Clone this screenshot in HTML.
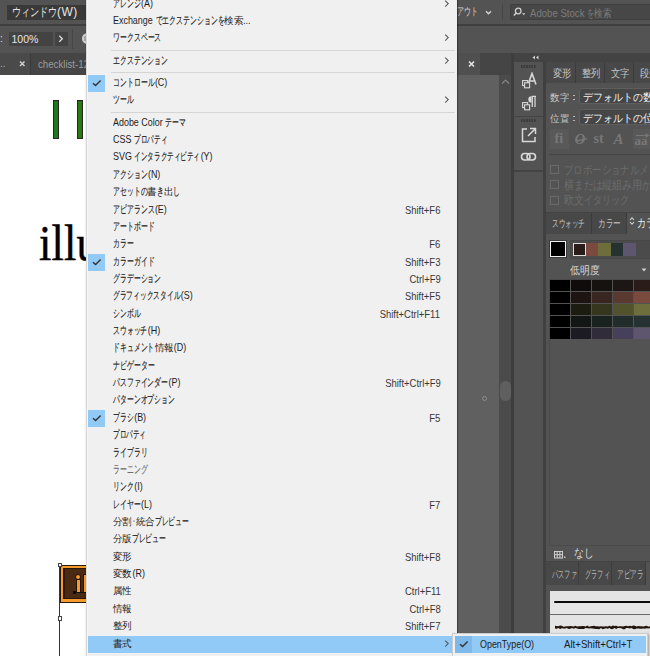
<!DOCTYPE html>
<html><head><meta charset="utf-8"><style>
*{margin:0;padding:0;box-sizing:border-box}
html,body{width:650px;height:656px;overflow:hidden;background:#535353;font-family:"Liberation Sans",sans-serif}
.a{position:absolute}
svg{display:block}
.j{display:inline-block;white-space:nowrap;vertical-align:baseline}
.j i{display:inline-block;font-style:normal;transform-origin:0 50%;white-space:nowrap}
#menu{position:absolute;left:86px;top:-10px;width:371px;height:680px;background:#f0f0f0;border-left:1px solid #d8d8d8;box-shadow:inset 1px 0 0 #f5f5f5,1px 0 1px rgba(0,0,0,.35),-1px 0 1px rgba(0,0,0,.05)}
#mi{position:absolute;left:-87px;top:10px;width:650px;height:656px}
.lbl{position:absolute;left:113px;height:17.360px;line-height:17.360px;font-size:10.5px;transform:scaleX(0.85);transform-origin:0 0;color:#1c1c1c;white-space:nowrap}
.dis{color:#6d6d6d}
.lbl .j i{-webkit-text-stroke:0.15px currentColor}
.lbl .k i{-webkit-text-stroke:0}
.sc{position:absolute;right:209.60000000000002px;height:17.360px;line-height:17.360px;font-size:10.5px;transform:scaleX(0.9);transform-origin:100% 0;color:#383838;white-space:nowrap;text-align:right}
.sep{position:absolute;left:110.5px;width:344px;height:1px;background:#d5d5d5}
.hl{position:absolute;left:88px;width:369px;height:17.3px;background:#91c9f7}
.chk{position:absolute;left:88px;width:17px;height:17px;background:#91c9f7}
.arr{position:absolute;left:444px;width:6px;height:17px}
</style></head><body>
<!-- top bar -->
<div class="a" style="left:0;top:0;width:650px;height:24px;background:#535353"></div>
<div class="a" style="left:0;top:24px;width:650px;height:1.5px;background:#3e3e3e"></div>
<div class="a" style="left:7px;top:5px;width:80px;height:15px;background:#393939"></div>
<div class="a" style="left:11.5px;top:3.5px;height:17px;line-height:17px;font-size:12px;color:#e6e6e6;white-space:nowrap"><span class="j" style="width:45.60px"><i style="font-size:11.5px;transform:scaleX(0.7600)">ウィンドウ</i></span><span style="letter-spacing:0.4px">(W)</span></div>
<!-- control bar -->
<div class="a" style="left:0;top:25.5px;width:650px;height:27px;background:#535353"></div>
<div class="a" style="left:9px;top:31.5px;width:44px;height:14.5px;background:#434343;border-radius:1px"></div>
<div class="a" style="left:55px;top:31.5px;width:13px;height:14.5px;background:#434343;border-radius:1px"></div>
<div class="a" style="left:11.5px;top:31px;height:16px;line-height:16px;font-size:10.5px;color:#e6e6e6">100%</div>
<div class="a" style="left:58px;top:31px;"><svg width="6" height="16"><path d="M1.3 4.8 L4.3 7.8 L1.3 10.8" fill="none" stroke="#ddd" stroke-width="1.3"/></svg></div>
<div class="a" style="left:0;top:32px;height:14px;line-height:14px;font-size:10px;color:#ddd">:</div>
<div class="a" style="left:72px;top:29px;width:1px;height:20px;background:#464646"></div>
<div class="a" style="left:81.6px;top:32.7px;width:11.5px;height:11.5px;border-radius:50%;background:#cfcfcf"></div><div class="a" style="left:83.5px;top:36px;width:4px;height:5px;background:#a8a8a8;border-radius:1px"></div>
<!-- tab bar -->
<div class="a" style="left:0;top:52.5px;width:512px;height:22.5px;background:#454545"></div>
<div class="a" style="left:0;top:52.5px;width:30px;height:22.5px;background:#4a4a4a"></div>
<div class="a" style="left:30px;top:52.5px;width:1px;height:22.5px;background:#3a3a3a"></div>
<div class="a" style="left:0;top:57px;height:14px;line-height:14px;font-size:10px;color:#a8a8a8">..</div>
<div class="a" style="left:18.5px;top:59px"><svg width="7" height="10"><path d="M1 2.5 L5.5 7 M5.5 2.5 L1 7" stroke="#cfcfcf" stroke-width="1.5"/></svg></div>
<div class="a" style="left:38px;top:57px;height:14px;line-height:14px;font-size:10.5px;color:#9c9c9c;white-space:nowrap;transform:scaleX(0.92);transform-origin:0 0">checklist-12</div>
<!-- canvas -->
<div class="a" style="left:0;top:75px;width:457px;height:581px;background:#ffffff"></div>
<div class="a" style="left:53px;top:100px;width:6px;height:39px;background:#1e781e;border:1px solid #2a2420"></div>
<div class="a" style="left:77px;top:100px;width:6px;height:39px;background:#2c7812;border:1px solid #2a2420"></div>
<div class="a" style="left:38.6px;top:218.2px;font-family:'Liberation Serif',serif;font-size:50px;line-height:50px;color:#000;white-space:nowrap;transform:scaleX(0.89);transform-origin:0 0;-webkit-text-stroke:0.5px #000;letter-spacing:0.2px">illustrator</div>
<div class="a" style="left:60px;top:564.5px;width:40px;height:38px;background:#2a1a0e"></div>
<div class="a" style="left:61px;top:565.5px;width:40px;height:36px;background:#f59a2c"></div>
<div class="a" style="left:63.4px;top:567.8px;width:40px;height:31.4px;background:#2a170c"></div>
<div class="a" style="left:65px;top:569px;width:40px;height:28.8px;background:#4a2a12"></div>
<div class="a" style="left:76.3px;top:574.5px;width:4px;height:4px;border-radius:50%;background:#f59a2c;box-shadow:0 0 0 0.8px #1a0e06"></div>
<div class="a" style="left:76.6px;top:580.2px;width:3.6px;height:12px;background:#f59a2c;box-shadow:0 0 0 0.8px #1a0e06"></div>
<div class="a" style="left:83.6px;top:575px;width:3px;height:17px;background:#f59a2c;box-shadow:0 0 0 0.8px #1a0e06"></div>
<div class="a" style="left:73.4px;top:591px;width:2.6px;height:2.6px;background:#000;border-radius:1px"></div>
<div class="a" style="left:75px;top:592.2px;width:12px;height:0.9px;background:#111"></div>
<div class="a" style="left:59.3px;top:566px;width:1px;height:90px;background:#333"></div>
<div class="a" style="left:57.5px;top:562.5px;width:4.8px;height:4.8px;background:#fff;border:1px solid #444"></div>
<div class="a" style="left:57.5px;top:616px;width:4.8px;height:4.8px;background:#fff;border:1px solid #444"></div>
<!-- pasteboard -->
<div class="a" style="left:457px;top:75px;width:42px;height:581px;background:#606060"></div>
<div class="a" style="left:457px;top:52.5px;width:23px;height:22.5px;background:#505050"></div>
<div class="a" style="left:468px;top:60px"><svg width="7" height="9"><path d="M1 1.5 L6 6.5 M6 1.5 L1 6.5" stroke="#e6e6e6" stroke-width="1.6"/></svg></div>
<div class="a" style="left:499px;top:75px;width:12px;height:581px;background:#4b4b4b"></div>
<div class="a" style="left:499.6px;top:380.8px;width:11.2px;height:20px;border-radius:5.5px;background:#5f5f5f"></div>
<div class="a" style="left:501px;top:79px"><svg width="9" height="6"><path d="M1 4.5 L4.5 1.2 L8 4.5" fill="none" stroke="#8a8a8a" stroke-width="1.1"/></svg></div>
<div class="a" style="left:481.5px;top:395.5px;width:5px;height:5px;border-radius:50%;border:1px solid #8c8c8c"></div>
<div class="a" style="left:511px;top:52.5px;width:3px;height:604px;background:#3e3e3e"></div>
<!-- icon column -->
<div class="a" style="left:514px;top:52.5px;width:136px;height:9.5px;background:#434343"></div>
<div class="a" style="left:514px;top:62px;width:29px;height:594px;background:#535353"></div>
<div class="a" style="left:514px;top:115.5px;width:29px;height:1.5px;background:#434343"></div>
<div class="a" style="left:514px;top:170px;width:29px;height:1.5px;background:#434343"></div>
<!-- panel -->
<div class="a" style="left:543px;top:62px;width:3px;height:594px;background:#404040"></div>
<div class="a" style="left:546px;top:62px;width:104px;height:594px;background:#535353"></div>

<!-- top bar right -->
<div class="a" style="left:457px;top:3px;height:16px;line-height:16px;font-size:11px;color:#d6d6d6;white-space:nowrap"><span class="j" style="width:21.00px"><i style="font-size:10.5px;transform:scaleX(0.6364)">アウト</i></span></div>
<div class="a" style="left:484.5px;top:9px"><svg width="7" height="8"><path d="M1 2.2 L3.5 4.8 L6 2.2" fill="none" stroke="#d6d6d6" stroke-width="1.3"/></svg></div>
<div class="a" style="left:501.5px;top:4px;width:1px;height:16px;background:#474747"></div>
<div class="a" style="left:509.5px;top:4px;width:150px;height:16px;background:#474747;border:1px solid #3f3f3f;border-radius:2px"></div>
<div class="a" style="left:512px;top:6px"><svg width="16" height="12"><circle cx="6.2" cy="5" r="2.8" fill="none" stroke="#cfcfcf" stroke-width="1.3"/><path d="M4.3 7 L1.8 9.6" stroke="#cfcfcf" stroke-width="1.5"/><path d="M10 7.3 L13.4 7.3 L11.7 9.2 Z" fill="#cfcfcf"/></svg></div>
<div class="a" style="left:530px;top:4.5px;height:16px;line-height:16px;font-size:10px;color:#7c7c7c;transform:scaleX(0.96);transform-origin:0 0;white-space:nowrap">Adobe Stock <span class="j" style="width:7.50px"><i style="font-size:10.5px;transform:scaleX(0.6818)">を</i></span><span class="j k" style="width:18.00px"><i style="font-size:10.5px;transform:scaleX(0.8182)">検索</i></span></div>
<!-- icon column icons -->
<div class="a" style="left:532px;top:55px"><svg width="7" height="5"><path d="M3 0.5 L0.5 2.5 L3 4.5 Z M6.5 0.5 L4 2.5 L6.5 4.5 Z" fill="#cfcfcf"/></svg></div>
<div class="a" style="left:521px;top:65px"><svg width="16" height="3"><rect x="0.0" y="0" width="1.6" height="3" fill="#3a3a3a"/><rect x="2.6" y="0" width="1.6" height="3" fill="#3a3a3a"/><rect x="5.2" y="0" width="1.6" height="3" fill="#3a3a3a"/><rect x="7.8" y="0" width="1.6" height="3" fill="#3a3a3a"/><rect x="10.4" y="0" width="1.6" height="3" fill="#3a3a3a"/><rect x="13.0" y="0" width="1.6" height="3" fill="#3a3a3a"/></svg></div>
<div class="a" style="left:521px;top:119px"><svg width="16" height="3"><rect x="0.0" y="0" width="1.6" height="3" fill="#3a3a3a"/><rect x="2.6" y="0" width="1.6" height="3" fill="#3a3a3a"/><rect x="5.2" y="0" width="1.6" height="3" fill="#3a3a3a"/><rect x="7.8" y="0" width="1.6" height="3" fill="#3a3a3a"/><rect x="10.4" y="0" width="1.6" height="3" fill="#3a3a3a"/><rect x="13.0" y="0" width="1.6" height="3" fill="#3a3a3a"/></svg></div>
<div class="a" style="left:520px;top:72px"><svg width="20" height="18"><path d="M8 12.5 L12 1.5 L16 12.5 M9.3 9 L14.7 9" fill="none" stroke="#d8d8d8" stroke-width="1.6"/><rect x="2.6" y="8.6" width="5" height="5" fill="#535353" stroke="#d8d8d8" stroke-width="1.1"/><rect x="4.6" y="10.8" width="5" height="5" fill="#535353" stroke="#d8d8d8" stroke-width="1.1"/></svg></div>
<div class="a" style="left:520px;top:94px"><svg width="20" height="18"><path d="M11.5 2.3 A3.2 3.2 0 0 0 11.5 8.7 Z" fill="#d8d8d8"/><path d="M11.8 2.3 L16 2.3 M12.3 2.3 L12.3 13 M15 2.3 L15 13" fill="none" stroke="#d8d8d8" stroke-width="1.3"/><rect x="2.6" y="8.6" width="5" height="5" fill="#535353" stroke="#d8d8d8" stroke-width="1.1"/><rect x="4.6" y="10.8" width="5" height="5" fill="#535353" stroke="#d8d8d8" stroke-width="1.1"/></svg></div>
<div class="a" style="left:520px;top:126px"><svg width="18" height="18"><path d="M7 3 L2.5 3 L2.5 15.5 L15 15.5 L15 11" fill="none" stroke="#d8d8d8" stroke-width="1.5"/><path d="M8 10 L15 3 M10 2.5 L15.5 2.5 L15.5 8" fill="none" stroke="#d8d8d8" stroke-width="1.5"/></svg></div>
<div class="a" style="left:520px;top:151px"><svg width="18" height="12"><rect x="1.5" y="2.5" width="8.5" height="6.5" rx="3.2" fill="none" stroke="#d8d8d8" stroke-width="1.6"/><rect x="7" y="2.5" width="8.5" height="6.5" rx="3.2" fill="none" stroke="#d8d8d8" stroke-width="1.6"/></svg></div>
<!-- panel top tabs -->
<div class="a" style="left:546px;top:62px;width:104px;height:21px;background:#484848"></div>
<div class="a" style="left:574.5px;top:62px;width:1px;height:21px;background:#3c3c3c"></div>
<div class="a" style="left:603.5px;top:62px;width:1px;height:21px;background:#3c3c3c"></div>
<div class="a" style="left:632.5px;top:62px;width:1px;height:21px;background:#3c3c3c"></div>
<div class="a" style="left:552.5px;top:64px;height:16px;line-height:16px;color:#c4c4c4;white-space:nowrap"><span class="j k" style="width:18.60px"><i style="font-size:11px;transform:scaleX(0.8455)">変形</i></span></div>
<div class="a" style="left:582px;top:64px;height:16px;line-height:16px;color:#c4c4c4;white-space:nowrap"><span class="j k" style="width:18.60px"><i style="font-size:11px;transform:scaleX(0.8455)">整列</i></span></div>
<div class="a" style="left:611px;top:64px;height:16px;line-height:16px;color:#c4c4c4;white-space:nowrap"><span class="j k" style="width:18.60px"><i style="font-size:11px;transform:scaleX(0.8455)">文字</i></span></div>
<div class="a" style="left:640px;top:64px;height:16px;line-height:16px;color:#c4c4c4;white-space:nowrap"><span class="j k" style="width:18.60px"><i style="font-size:11px;transform:scaleX(0.8455)">段落</i></span></div>
<!-- opentype panel body -->
<div class="a" style="left:549.5px;top:88px;height:16px;line-height:16px;color:#c8c8c8;white-space:nowrap"><span class="j k" style="width:19.00px"><i style="font-size:10px;transform:scaleX(0.9500)">数字</i></span></div><div class="a" style="left:573px;top:94.5px;width:1.6px;height:1.6px;background:#b8b8b8"></div><div class="a" style="left:573px;top:98.5px;width:1.6px;height:1.6px;background:#b8b8b8"></div>
<div class="a" style="left:578.5px;top:88px;width:80px;height:16px;background:#464646;border:1px solid #5e5e5e;border-radius:3px"></div>
<div class="a" style="left:583px;top:88px;height:16px;line-height:16px;color:#f4f4f4;white-space:nowrap"><span class="j" style="width:59.50px"><i style="font-size:10.5px;transform:scaleX(0.9015)">デフォルトの</i></span><span class="j k" style="width:22.00px"><i style="font-size:10.5px;transform:scaleX(1.0000)">数字</i></span></div>
<div class="a" style="left:549.5px;top:109px;height:16px;line-height:16px;color:#c8c8c8;white-space:nowrap"><span class="j k" style="width:19.00px"><i style="font-size:10px;transform:scaleX(0.9500)">位置</i></span></div><div class="a" style="left:573px;top:115.5px;width:1.6px;height:1.6px;background:#b8b8b8"></div><div class="a" style="left:573px;top:119.5px;width:1.6px;height:1.6px;background:#b8b8b8"></div>
<div class="a" style="left:578.5px;top:109px;width:80px;height:16px;background:#464646;border:1px solid #5e5e5e;border-radius:3px"></div>
<div class="a" style="left:583px;top:108.5px;height:16px;line-height:16px;color:#f4f4f4;white-space:nowrap"><span class="j" style="width:59.50px"><i style="font-size:10.5px;transform:scaleX(0.9015)">デフォルトの</i></span><span class="j k" style="width:22.00px"><i style="font-size:10.5px;transform:scaleX(1.0000)">位置</i></span></div>
<div class="a" style="left:550px;top:129px;width:19px;height:20px;background:#595959"></div>
<div class="a" style="left:633px;top:129px;width:19px;height:20px;background:#595959"></div>
<div class="a" style="left:554.5px;top:129px;height:20px;line-height:20px;font-family:'Liberation Serif',serif;font-weight:bold;font-size:14px;color:#777;white-space:nowrap">fi</div>
<div class="a" style="left:574.5px;top:129px;height:20px;line-height:20px;font-family:'Liberation Serif',serif;font-style:italic;font-weight:bold;font-size:15px;color:#777;white-space:nowrap">O</div>
<div class="a" style="left:575px;top:137.5px"><svg width="14" height="4"><path d="M1 3.2 L12 0.6" stroke="#777" stroke-width="1.4"/></svg></div>
<div class="a" style="left:593.5px;top:129px;height:20px;line-height:20px;font-family:'Liberation Serif',serif;font-weight:bold;font-size:14px;color:#777;white-space:nowrap">st</div>
<div class="a" style="left:613.5px;top:129px;height:20px;line-height:20px;font-family:'Liberation Serif',serif;font-style:italic;font-weight:bold;font-size:15px;color:#777;white-space:nowrap">A</div>
<div class="a" style="left:634.5px;top:131px;height:20px;line-height:20px;font-family:'Liberation Serif',serif;font-weight:bold;font-size:13px;color:#777;white-space:nowrap">aa</div><div class="a" style="left:635px;top:132.5px"><svg width="16" height="5"><path d="M1 2.5 L13 2.5 M10.5 0.8 L13.5 2.5 L10.5 4.2" fill="none" stroke="#777" stroke-width="1.2"/></svg></div>
<div class="a" style="left:549px;top:154px;width:101px;height:1px;background:#444"></div>
<div class="a" style="left:550px;top:164.8px;width:9px;height:9px;border:1px solid #6a6a6a"></div>
<div class="a" style="left:550px;top:180.4px;width:9px;height:9px;border:1px solid #6a6a6a"></div>
<div class="a" style="left:550px;top:196px;width:9px;height:9px;border:1px solid #6a6a6a"></div>
<div class="a" style="left:563.5px;top:161px;height:16px;line-height:16px;color:#6c6c6c;white-space:nowrap"><span class="j" style="width:122.20px"><i style="font-size:11.5px;transform:scaleX(0.7833)">プロポーショナルメトリクス</i></span></div>
<div class="a" style="left:563.5px;top:175.8px;height:16px;line-height:16px;color:#6c6c6c;white-space:nowrap"><span class="j k" style="width:10.00px"><i style="font-size:11.5px;transform:scaleX(0.8333)">横</i></span><span class="j" style="width:28.80px"><i style="font-size:11.5px;transform:scaleX(0.8000)">または</i></span><span class="j k" style="width:20.00px"><i style="font-size:11.5px;transform:scaleX(0.8333)">縦組</i></span><span class="j" style="width:9.60px"><i style="font-size:11.5px;transform:scaleX(0.8000)">み</i></span><span class="j k" style="width:10.00px"><i style="font-size:11.5px;transform:scaleX(0.8333)">用</i></span><span class="j" style="width:19.20px"><i style="font-size:11.5px;transform:scaleX(0.8000)">かな</i></span></div>
<div class="a" style="left:563.5px;top:191.3px;height:16px;line-height:16px;color:#6c6c6c;white-space:nowrap"><span class="j k" style="width:20.00px"><i style="font-size:11.5px;transform:scaleX(0.8333)">欧文</i></span><span class="j" style="width:45.40px"><i style="font-size:11.5px;transform:scaleX(0.7567)">イタリック</i></span></div>
<!-- swatches panel tabs -->
<div class="a" style="left:546px;top:212.5px;width:104px;height:21px;background:#484848"></div>
<div class="a" style="left:546px;top:212px;width:104px;height:1px;background:#444"></div>
<div class="a" style="left:591px;top:212.5px;width:1px;height:21px;background:#3c3c3c"></div>
<div class="a" style="left:625.5px;top:212.5px;width:1px;height:21px;background:#3c3c3c"></div>
<div class="a" style="left:626.5px;top:212.5px;width:24px;height:21px;background:#535353"></div>
<div class="a" style="left:552px;top:214px;height:16px;line-height:16px;color:#c4c4c4;white-space:nowrap"><span class="j" style="width:32.80px"><i style="font-size:11px;transform:scaleX(0.5964)">スウォッチ</i></span></div>
<div class="a" style="left:598px;top:214px;height:16px;line-height:16px;color:#c4c4c4;white-space:nowrap"><span class="j" style="width:22.80px"><i style="font-size:11px;transform:scaleX(0.6909)">カラー</i></span></div>
<div class="a" style="left:629px;top:216px"><svg width="6" height="10"><path d="M1 4 L3 1.8 L5 4 M1 6 L3 8.2 L5 6" fill="none" stroke="#cfcfcf" stroke-width="1.1"/></svg></div>
<div class="a" style="left:637px;top:214px;height:16px;line-height:16px;color:#f0f0f0;white-space:nowrap"><span class="j" style="width:54.00px"><i style="font-size:11.5px;transform:scaleX(0.7500)">カラーガイド</i></span></div>
<!-- color guide body -->
<div class="a" style="left:549.7px;top:240.5px;width:16px;height:16px;background:#000;border:1.6px solid #f2f2f2;box-shadow:0 0 0 1px #3a3a3a"></div>
<div class="a" style="left:570px;top:240px;width:85px;height:19px;background:#4b4b4b;border:1px solid #474747"></div>
<div class="a" style="left:573px;top:243px;width:12.5px;height:13px;background:#2a1c18;border:1.5px solid #dcdcdc"></div>
<div class="a" style="left:585.5px;top:243px;width:12.5px;height:13px;background:#7a4a3e"></div>
<div class="a" style="left:598px;top:243px;width:12.5px;height:13px;background:#6e6e3c"></div>
<div class="a" style="left:610.5px;top:243px;width:12.5px;height:13px;background:#263232"></div>
<div class="a" style="left:623px;top:243px;width:12.5px;height:13px;background:#5e566e"></div>
<div class="a" style="left:570px;top:261px;height:16px;line-height:16px;color:#d8d8d8;white-space:nowrap"><span class="j k" style="width:29.40px"><i style="font-size:11px;transform:scaleX(0.8909)">低明度</i></span></div>
<div class="a" style="left:641px;top:268px"><svg width="6" height="4"><path d="M0.5 0.5 L5.5 0.5 L3 3.5 Z" fill="#d0d0d0"/></svg></div>
<div class="a" style="left:549px;top:279px;width:110px;height:267px;border:1px solid #4a4a4a"></div>
<div class="a" style="left:550px;top:280px;width:20px;height:11px;background:#000000"></div>
<div class="a" style="left:571px;top:280px;width:20px;height:11px;background:#100c0b"></div>
<div class="a" style="left:592px;top:280px;width:20px;height:11px;background:#151210"></div>
<div class="a" style="left:613px;top:280px;width:20px;height:11px;background:#1c1614"></div>
<div class="a" style="left:634px;top:280px;width:20px;height:11px;background:#2a1c18"></div>
<div class="a" style="left:550px;top:292px;width:20px;height:11px;background:#000000"></div>
<div class="a" style="left:571px;top:292px;width:20px;height:11px;background:#1e1412"></div>
<div class="a" style="left:592px;top:292px;width:20px;height:11px;background:#3a2620"></div>
<div class="a" style="left:613px;top:292px;width:20px;height:11px;background:#5a3a30"></div>
<div class="a" style="left:634px;top:292px;width:20px;height:11px;background:#7a4a3e"></div>
<div class="a" style="left:550px;top:304px;width:20px;height:11px;background:#000000"></div>
<div class="a" style="left:571px;top:304px;width:20px;height:11px;background:#1c1c10"></div>
<div class="a" style="left:592px;top:304px;width:20px;height:11px;background:#36361e"></div>
<div class="a" style="left:613px;top:304px;width:20px;height:11px;background:#52522c"></div>
<div class="a" style="left:634px;top:304px;width:20px;height:11px;background:#6e6e3c"></div>
<div class="a" style="left:550px;top:316px;width:20px;height:11px;background:#000000"></div>
<div class="a" style="left:571px;top:316px;width:20px;height:11px;background:#121614"></div>
<div class="a" style="left:592px;top:316px;width:20px;height:11px;background:#1a2220"></div>
<div class="a" style="left:613px;top:316px;width:20px;height:11px;background:#222c2a"></div>
<div class="a" style="left:634px;top:316px;width:20px;height:11px;background:#263232"></div>
<div class="a" style="left:550px;top:328px;width:20px;height:11px;background:#000000"></div>
<div class="a" style="left:571px;top:328px;width:20px;height:11px;background:#1c1a22"></div>
<div class="a" style="left:592px;top:328px;width:20px;height:11px;background:#302c3a"></div>
<div class="a" style="left:613px;top:328px;width:20px;height:11px;background:#46405a"></div>
<div class="a" style="left:634px;top:328px;width:20px;height:11px;background:#5e566e"></div>
<div class="a" style="left:553.5px;top:550.5px"><svg width="12" height="8"><rect x="0.5" y="0.5" width="8" height="6.5" fill="none" stroke="#d0d0d0" stroke-width="1"/><path d="M3.2 0.5 V7 M5.9 0.5 V7 M0.5 3.7 H8.5" stroke="#d0d0d0" stroke-width="1"/><rect x="10" y="5.5" width="1.4" height="1.4" fill="#d0d0d0"/></svg></div>
<div class="a" style="left:573.5px;top:544px;height:16px;line-height:16px;color:#d8d8d8;white-space:nowrap"><span class="j" style="width:19.60px"><i style="font-size:12px;transform:scaleX(0.8167)">なし</i></span></div>
<!-- brushes panel tabs -->
<div class="a" style="left:546px;top:561px;width:104px;height:1px;background:#434343"></div>
<div class="a" style="left:546px;top:562px;width:99px;height:22.5px;background:#484848"></div>
<div class="a" style="left:578px;top:562px;width:1px;height:22.5px;background:#3c3c3c"></div>
<div class="a" style="left:611px;top:562px;width:1px;height:22.5px;background:#3c3c3c"></div>
<div class="a" style="left:644.5px;top:562px;width:1px;height:22.5px;background:#3c3c3c"></div>
<div class="a" style="left:552px;top:564.8px;height:16px;line-height:16px;color:#b8b8b8;white-space:nowrap"><span class="j" style="width:24.80px"><i style="font-size:10.5px;transform:scaleX(0.5636)">パスファ</i></span></div>
<div class="a" style="left:585px;top:564.8px;height:16px;line-height:16px;color:#b8b8b8;white-space:nowrap"><span class="j" style="width:24.80px"><i style="font-size:10.5px;transform:scaleX(0.5636)">グラフィ</i></span></div>
<div class="a" style="left:617px;top:564.8px;height:16px;line-height:16px;color:#b8b8b8;white-space:nowrap"><span class="j" style="width:26.40px"><i style="font-size:10.5px;transform:scaleX(0.6000)">アピアラ</i></span></div>
<div class="a" style="left:550px;top:590.5px;width:100px;height:66px;background:#e4e4e4"></div>
<div class="a" style="left:553.8px;top:600.8px;width:97px;height:1.8px;background:#0a0a0a;border-radius:1px"></div>
<div class="a" style="left:550px;top:614px;width:100px;height:1px;background:#6a6a6a"></div>
<div class="a" style="left:555px;top:624.5px"><svg width="100" height="5"><path d="M0.0 0.71 L1.7 0.88 L3.4 1.21 L5.1 0.42 L6.8 0.74 L8.5 1.69 L10.2 1.49 L11.9 1.23 L13.6 1.23 L15.3 1.08 L17.0 1.27 L18.7 1.39 L20.4 0.79 L22.1 1.53 L23.8 1.33 L25.5 1.33 L27.2 0.91 L28.9 0.98 L30.6 1.54 L32.3 0.58 L34.0 1.66 L35.7 1.21 L37.4 1.06 L39.1 0.86 L40.8 1.16 L42.5 1.29 L44.2 1.51 L45.9 1.27 L47.6 1.52 L49.3 1.58 L51.0 1.33 L52.7 1.48 L54.4 0.77 L56.1 1.51 L57.8 0.52 L59.5 0.93 L61.2 0.78 L62.9 1.53 L64.6 1.20 L66.3 1.33 L68.0 1.55 L69.7 1.06 L71.4 0.80 L73.1 1.18 L74.8 0.66 L76.5 1.19 L78.2 0.46 L79.9 0.81 L81.6 1.57 L83.3 1.00 L85.0 1.24 L86.7 1.13 L88.4 1.62 L90.1 0.96 L91.8 0.71 L93.5 1.67 L95.2 1.11 L96.9 0.94 L98.6 0.43 L98.6 3.70 L96.9 3.65 L95.2 2.91 L93.5 3.58 L91.8 3.29 L90.1 3.84 L88.4 3.56 L86.7 3.71 L85.0 3.67 L83.3 3.58 L81.6 3.39 L79.9 4.15 L78.2 4.03 L76.5 3.10 L74.8 3.43 L73.1 2.94 L71.4 3.00 L69.7 4.20 L68.0 4.17 L66.3 3.33 L64.6 2.96 L62.9 2.96 L61.2 3.90 L59.5 3.10 L57.8 3.94 L56.1 4.19 L54.4 2.98 L52.7 3.65 L51.0 3.17 L49.3 3.64 L47.6 4.15 L45.9 3.11 L44.2 4.19 L42.5 4.11 L40.8 4.08 L39.1 3.66 L37.4 3.40 L35.7 3.29 L34.0 3.47 L32.3 3.18 L30.6 3.03 L28.9 4.12 L27.2 3.94 L25.5 4.10 L23.8 4.04 L22.1 3.51 L20.4 2.94 L18.7 3.67 L17.0 2.98 L15.3 3.86 L13.6 4.03 L11.9 3.10 L10.2 3.52 L8.5 3.51 L6.8 3.20 L5.1 3.99 L3.4 2.99 L1.7 3.69 L0.0 3.61 Z" fill="#24160f"/></svg></div>
<div id="menu"><div id="mi">
<div class="lbl" style="top:-5.44px"><span class="j" style="width:32.47px"><i style="font-size:10.5px;transform:scaleX(0.7380)">アレンジ</i></span><span style="margin-left:0.6px">(A)</span></div>
<div class="arr" style="top:-5.44px"><svg width="6" height="17" viewBox="0 0 6 17"><path d="M1.2 5.6 L4.2 8.6 L1.2 11.6" fill="none" stroke="#5a5a5a" stroke-width="1.1"/></svg></div>
<div class="lbl" style="top:11.92px">Exchange <span class="j" style="width:81.06px"><i style="font-size:10.5px;transform:scaleX(0.7369)">でエクステンションを</i></span><span class="j k" style="width:22.35px"><i style="font-size:9.5px;transform:scaleX(1.1176)">検索</i></span>...</div>
<div class="lbl" style="top:29.28px"><span class="j" style="width:56.82px"><i style="font-size:10.5px;transform:scaleX(0.7380)">ワークスペース</i></span></div>
<div class="arr" style="top:29.28px"><svg width="6" height="17" viewBox="0 0 6 17"><path d="M1.2 5.6 L4.2 8.6 L1.2 11.6" fill="none" stroke="#5a5a5a" stroke-width="1.1"/></svg></div>
<div class="sep" style="top:49.64px"></div>
<div class="lbl" style="top:51.64px"><span class="j" style="width:64.82px"><i style="font-size:10.5px;transform:scaleX(0.7366)">エクステンション</i></span></div>
<div class="arr" style="top:51.64px"><svg width="6" height="17" viewBox="0 0 6 17"><path d="M1.2 5.6 L4.2 8.6 L1.2 11.6" fill="none" stroke="#5a5a5a" stroke-width="1.1"/></svg></div>
<div class="sep" style="top:72.00px"></div>
<div class="chk" style="top:75.00px"><svg width="17" height="17" viewBox="0 0 17 17"><path d="M5 8.2 L7.6 10.6 L12.6 5.4" fill="none" stroke="#333" stroke-width="1.4"/></svg></div>
<div class="lbl" style="top:74.00px"><span class="j" style="width:48.71px"><i style="font-size:10.5px;transform:scaleX(0.7380)">コントロール</i></span><span style="margin-left:0.6px">(C)</span></div>
<div class="lbl" style="top:91.36px"><span class="j" style="width:24.35px"><i style="font-size:10.5px;transform:scaleX(0.7380)">ツール</i></span></div>
<div class="arr" style="top:91.36px"><svg width="6" height="17" viewBox="0 0 6 17"><path d="M1.2 5.6 L4.2 8.6 L1.2 11.6" fill="none" stroke="#5a5a5a" stroke-width="1.1"/></svg></div>
<div class="sep" style="top:111.72px"></div>
<div class="lbl" style="top:113.72px">Adobe Color <span class="j" style="width:24.35px"><i style="font-size:10.5px;transform:scaleX(0.7380)">テーマ</i></span></div>
<div class="lbl" style="top:131.08px">CSS <span class="j" style="width:38.71px"><i style="font-size:10.5px;transform:scaleX(0.7037)">プロパティ</i></span></div>
<div class="lbl" style="top:148.44px">SVG <span class="j" style="width:77.41px"><i style="font-size:10.5px;transform:scaleX(0.7037)">インタラクティビティ</i></span><span style="margin-left:0.6px">(Y)</span></div>
<div class="lbl" style="top:165.80px"><span class="j" style="width:40.47px"><i style="font-size:10.5px;transform:scaleX(0.7358)">アクション</i></span><span style="margin-left:0.6px">(N)</span></div>
<div class="lbl" style="top:183.16px"><span class="j" style="width:40.47px"><i style="font-size:10.5px;transform:scaleX(0.7358)">アセットの</i></span><span class="j k" style="width:11.18px"><i style="font-size:9.5px;transform:scaleX(1.1176)">書</i></span><span class="j" style="width:8.12px"><i style="font-size:10.5px;transform:scaleX(0.7380)">き</i></span><span class="j k" style="width:11.18px"><i style="font-size:9.5px;transform:scaleX(1.1176)">出</i></span><span class="j" style="width:8.12px"><i style="font-size:10.5px;transform:scaleX(0.7380)">し</i></span></div>
<div class="lbl" style="top:200.52px"><span class="j" style="width:48.71px"><i style="font-size:10.5px;transform:scaleX(0.7380)">アピアランス</i></span><span style="margin-left:0.6px">(E)</span></div>
<div class="sc" style="top:201.52px">Shift+F6</div>
<div class="lbl" style="top:217.88px"><span class="j" style="width:48.71px"><i style="font-size:10.5px;transform:scaleX(0.7380)">アートボード</i></span></div>
<div class="lbl" style="top:235.24px"><span class="j" style="width:24.35px"><i style="font-size:10.5px;transform:scaleX(0.7380)">カラー</i></span></div>
<div class="sc" style="top:236.24px">F6</div>
<div class="chk" style="top:253.60px"><svg width="17" height="17" viewBox="0 0 17 17"><path d="M5 8.2 L7.6 10.6 L12.6 5.4" fill="none" stroke="#333" stroke-width="1.4"/></svg></div>
<div class="lbl" style="top:252.60px"><span class="j" style="width:48.71px"><i style="font-size:10.5px;transform:scaleX(0.7380)">カラーガイド</i></span></div>
<div class="sc" style="top:253.60px">Shift+F3</div>
<div class="lbl" style="top:269.96px"><span class="j" style="width:56.71px"><i style="font-size:10.5px;transform:scaleX(0.7364)">グラデーション</i></span></div>
<div class="sc" style="top:270.96px">Ctrl+F9</div>
<div class="lbl" style="top:287.32px"><span class="j" style="width:79.18px"><i style="font-size:10.5px;transform:scaleX(0.7198)">グラフィックスタイル</i></span><span style="margin-left:0.6px">(S)</span></div>
<div class="sc" style="top:288.32px">Shift+F5</div>
<div class="lbl" style="top:304.68px"><span class="j" style="width:32.47px"><i style="font-size:10.5px;transform:scaleX(0.7380)">シンボル</i></span></div>
<div class="sc" style="top:305.68px">Shift+Ctrl+F11</div>
<div class="lbl" style="top:322.04px"><span class="j" style="width:40.35px"><i style="font-size:10.5px;transform:scaleX(0.7337)">スウォッチ</i></span><span style="margin-left:0.6px">(H)</span></div>
<div class="lbl" style="top:339.40px"><span class="j" style="width:48.59px"><i style="font-size:10.5px;transform:scaleX(0.7362)">ドキュメント</i></span><span class="j k" style="width:22.35px"><i style="font-size:9.5px;transform:scaleX(1.1176)">情報</i></span><span style="margin-left:0.6px">(D)</span></div>
<div class="lbl" style="top:356.76px"><span class="j" style="width:48.71px"><i style="font-size:10.5px;transform:scaleX(0.7380)">ナビゲーター</i></span></div>
<div class="lbl" style="top:374.12px"><span class="j" style="width:64.82px"><i style="font-size:10.5px;transform:scaleX(0.7366)">パスファインダー</i></span><span style="margin-left:0.6px">(P)</span></div>
<div class="sc" style="top:375.12px">Shift+Ctrl+F9</div>
<div class="lbl" style="top:391.48px"><span class="j" style="width:72.94px"><i style="font-size:10.5px;transform:scaleX(0.7368)">パターンオプション</i></span></div>
<div class="chk" style="top:409.84px"><svg width="17" height="17" viewBox="0 0 17 17"><path d="M5 8.2 L7.6 10.6 L12.6 5.4" fill="none" stroke="#333" stroke-width="1.4"/></svg></div>
<div class="lbl" style="top:408.84px"><span class="j" style="width:24.35px"><i style="font-size:10.5px;transform:scaleX(0.7380)">ブラシ</i></span><span style="margin-left:0.6px">(B)</span></div>
<div class="sc" style="top:409.84px">F5</div>
<div class="lbl" style="top:426.20px"><span class="j" style="width:38.71px"><i style="font-size:10.5px;transform:scaleX(0.7037)">プロパティ</i></span></div>
<div class="lbl" style="top:443.56px"><span class="j" style="width:40.59px"><i style="font-size:10.5px;transform:scaleX(0.7380)">ライブラリ</i></span></div>
<div class="lbl dis" style="top:460.92px"><span class="j" style="width:40.59px"><i style="font-size:10.5px;transform:scaleX(0.7380)">ラーニング</i></span></div>
<div class="lbl" style="top:478.28px"><span class="j" style="width:24.35px"><i style="font-size:10.5px;transform:scaleX(0.7380)">リンク</i></span><span style="margin-left:0.6px">(I)</span></div>
<div class="lbl" style="top:495.64px"><span class="j" style="width:32.47px"><i style="font-size:10.5px;transform:scaleX(0.7380)">レイヤー</i></span><span style="margin-left:0.6px">(L)</span></div>
<div class="sc" style="top:496.64px">F7</div>
<div class="lbl" style="top:513.00px"><span class="j k" style="width:22.35px"><i style="font-size:9.5px;transform:scaleX(1.1176)">分割</i></span><span class="j" style="width:4.50px"><i style="font-size:10.5px;transform:scaleX(0.4091)">・</i></span><span class="j k" style="width:22.35px"><i style="font-size:9.5px;transform:scaleX(1.1176)">統合</i></span><span class="j" style="width:40.47px"><i style="font-size:10.5px;transform:scaleX(0.7358)">プレビュー</i></span></div>
<div class="lbl" style="top:530.36px"><span class="j k" style="width:22.35px"><i style="font-size:9.5px;transform:scaleX(1.1176)">分版</i></span><span class="j" style="width:40.47px"><i style="font-size:10.5px;transform:scaleX(0.7358)">プレビュー</i></span></div>
<div class="lbl" style="top:547.72px"><span class="j k" style="width:22.35px"><i style="font-size:9.5px;transform:scaleX(1.1176)">変形</i></span></div>
<div class="sc" style="top:548.72px">Shift+F8</div>
<div class="lbl" style="top:565.08px"><span class="j k" style="width:22.35px"><i style="font-size:9.5px;transform:scaleX(1.1176)">変数</i></span><span style="margin-left:0.6px">(R)</span></div>
<div class="lbl" style="top:582.44px"><span class="j k" style="width:22.35px"><i style="font-size:9.5px;transform:scaleX(1.1176)">属性</i></span></div>
<div class="sc" style="top:583.44px">Ctrl+F11</div>
<div class="lbl" style="top:599.80px"><span class="j k" style="width:22.35px"><i style="font-size:9.5px;transform:scaleX(1.1176)">情報</i></span></div>
<div class="sc" style="top:600.80px">Ctrl+F8</div>
<div class="lbl" style="top:617.16px"><span class="j k" style="width:22.35px"><i style="font-size:9.5px;transform:scaleX(1.1176)">整列</i></span></div>
<div class="sc" style="top:618.16px">Shift+F7</div>
<div class="hl" style="top:635.52px"></div>
<div class="lbl" style="top:634.52px"><span class="j k" style="width:22.35px"><i style="font-size:9.5px;transform:scaleX(1.1176)">書式</i></span></div>
<div class="arr" style="top:634.52px"><svg width="6" height="17" viewBox="0 0 6 17"><path d="M1.2 5.6 L4.2 8.6 L1.2 11.6" fill="none" stroke="#5a5a5a" stroke-width="1.1"/></svg></div>
</div></div>
<!-- submenu -->
<div class="a" style="left:452px;top:633px;width:196px;height:30px;background:#f0f0f0;border:1px solid #cccccc;box-shadow:1px 1px 2px rgba(0,0,0,.3)"></div>
<div class="a" style="left:454.5px;top:635.5px;width:191px;height:17px;background:#91c9f7"></div>
<div class="a" style="left:454.5px;top:635.5px;width:17px;height:17px;background:#7fb9ea"></div>
<div class="a" style="left:454.5px;top:635.5px"><svg width="17" height="17" viewBox="0 0 17 17"><path d="M5 8.2 L7.6 10.6 L12.6 5.4" fill="none" stroke="#333" stroke-width="1.4"/></svg></div>
<div class="a" style="left:479.5px;top:635.7px;height:17px;line-height:17px;font-size:10.5px;color:#1c1c1c;white-space:nowrap;transform:scaleX(0.85);transform-origin:0 0">OpenType(O)</div>
<div class="a" style="left:564px;top:635.7px;height:17px;line-height:17px;font-size:10.5px;color:#1c1c1c;white-space:nowrap;transform:scaleX(0.92);transform-origin:0 0">Alt+Shift+Ctrl+T</div>

</body></html>
